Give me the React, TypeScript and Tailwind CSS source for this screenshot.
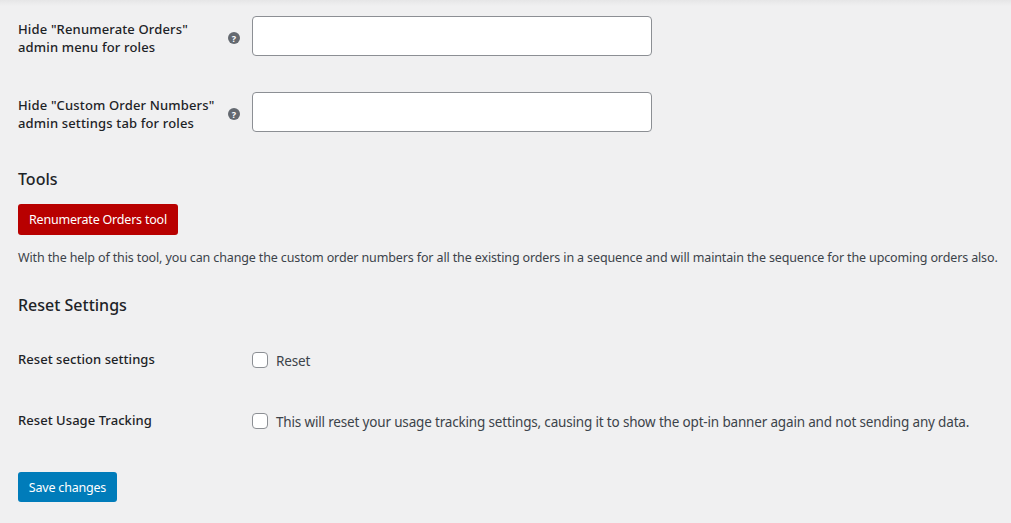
import React from 'react';

const font = { fontFamily: '"Noto Sans", sans-serif' };

const HelpTip = () => (
  <span className="flex w-[12px] h-[12px] mt-[4px] rounded-full bg-[#646970] text-white text-[9px] font-bold items-center justify-center leading-none">?</span>
);

const SelectRow = ({ line1, line2 }: { line1: string; line2: string }) => (
  <div className="flex items-center h-[40px] mb-[36px]">
    <div className="w-[210px] pt-[4px] text-[13px] leading-[18px] font-medium text-[#1d2327] tracking-[0.15px] whitespace-nowrap">
      <div>{line1}</div>
      <div>{line2}</div>
    </div>
    <div className="w-[24px] flex justify-start"><HelpTip /></div>
    <div className="w-[400px] h-[40px] bg-white border border-[#8c8f94] rounded-[4px]" />
  </div>
);

const CheckRow = ({ label, text, mb }: { label: string; text: string; mb: string }) => (
  <div className={`flex items-center h-[20px] ${mb}`}>
    <div className="w-[234px] text-[13px] font-medium text-[#1d2327] tracking-[0.05px]">{label}</div>
    <span className="w-[16px] h-[16px] bg-white border border-[#8c8f94] rounded-[4px] mr-[8px]" />
    <span className="pt-[2px] text-[13.5px] text-[#3c434a] tracking-[-0.17px]">{text}</span>
  </div>
);

export default function App() {
  return (
    <div style={font} className="w-[1011px] h-[523px] overflow-hidden bg-[#f0f0f1] relative">
      <div className="absolute top-0 left-0 right-0 h-[6px] bg-gradient-to-b from-[#e6e6e7] to-[#f0f0f1]" />
      <div className="relative pl-[18px] pt-[16px]">
        <SelectRow line1={'Hide "Renumerate Orders"'} line2="admin menu for roles" />
        <SelectRow line1={'Hide "Custom Order Numbers"'} line2="admin settings tab for roles" />
        <h2 className="text-[16px] leading-[20px] font-medium text-[#1d2327] pt-[1px] mb-[15px]">Tools</h2>
        <div className="flex items-center justify-center w-[160px] h-[31px] pt-[2px] bg-[#b80000] rounded-[3px] text-white text-[12.5px] tracking-[-0.2px]">Renumerate Orders tool</div>
        <p className="text-[12.5px] leading-[18px] text-[#3c434a] mt-[14px] tracking-[-0.13px] whitespace-nowrap">With the help of this tool, you can change the custom order numbers for all the existing orders in a sequence and will maintain the sequence for the upcoming orders also.</p>
        <h2 className="text-[16px] leading-[20px] font-medium text-[#1d2327] mt-[28px] mb-[35px]">Reset Settings</h2>
        <CheckRow label="Reset section settings" text="Reset" mb="mb-[41px]" />
        <CheckRow label="Reset Usage Tracking" text="This will reset your usage tracking settings, causing it to show the opt-in banner again and not sending any data." mb="mb-[41px]" />
        <div className="flex items-center justify-center w-[99px] h-[30px] pt-[2px] bg-[#007cba] rounded-[3px] text-white text-[12.5px] tracking-[-0.2px]">Save changes</div>
      </div>
    </div>
  );
}
